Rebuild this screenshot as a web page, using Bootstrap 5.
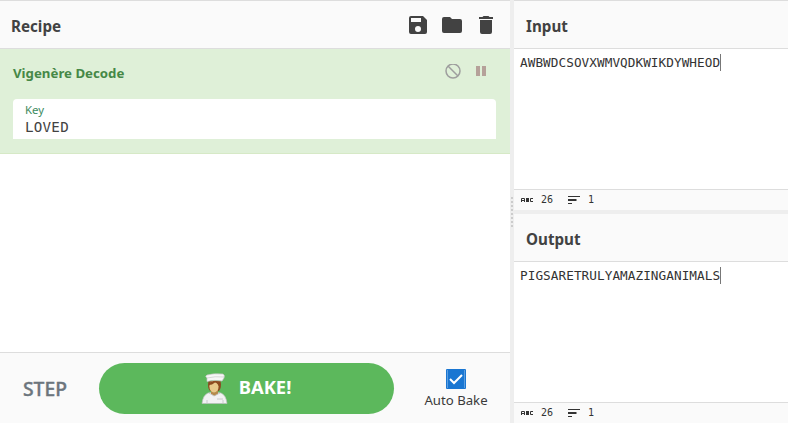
<!DOCTYPE html>
<html lang="en">
<head>
<meta charset="utf-8">
<meta name="viewport" content="width=device-width, initial-scale=1">
<title>Recipe</title>
<link href="https://cdn.jsdelivr.net/npm/bootstrap@5.3.0/dist/css/bootstrap.min.css" rel="stylesheet">
<style>
body{font-family:"Noto Sans","Open Sans",sans-serif;color:#424242;font-size:14px;background:#fff}
svg{display:block;flex:none}
.workspace{height:423px}
.recipe-pane{width:510px;flex:none}
.pane-title{height:49px;flex:none;background:#fafafa;border-top:1px solid #ddd;border-bottom:1px solid #ddd;font-weight:700;font-size:15.2px;padding:3px 12px 0 11px}
.io-pane .pane-title{padding-left:12px}
.io-pane .output-title{height:48px;border-top:0;padding-top:4px}
.tools{gap:14px;padding-right:2px}
.operation{height:105px;flex:none;background:#dff0d8;border-bottom:1px solid #d6e9c6;padding:0 14px 0 13px}
.op-title{height:50px;padding-top:15px;color:#468847;font-weight:700;font-size:13.25px;line-height:18px}
.op-icons{gap:15px;margin-right:10px}
.arg{height:40px;background:#fff;border-radius:4px 4px 0 0;padding:4px 12px 0}
.arg-label{font-size:11.4px;line-height:14px;height:15px;color:#3d8b60}
.arg-value{font:14.2px/19px "DejaVu Sans Mono",monospace;letter-spacing:.25px;color:#424242}
.controls{height:71px;flex:none;background:#fafafa;border-top:1px solid #ddd}
.step{width:99px;padding-left:23px;font-size:19.3px;font-weight:500;color:#6c757d;padding-top:2px;-webkit-text-stroke:.4px #6c757d}
.bake{width:295px;height:51px;border-radius:26px;background:#5cb85c;color:#fff;font-size:18.4px;font-weight:700;padding:0 3px 3px 0;border:0}
.bake:hover{background:#5cb85c;color:#fff}
.auto{width:116px;padding:16px 0 0 8px}
.auto span{font-size:13.2px;line-height:20px;color:#3a3a3a;margin-top:1px}
.gutter-v{width:4px;flex:none;background:#eee}
.gutter-h{height:4px;flex:none;background:#eee}
.code{font:12.7px/16px "DejaVu Sans Mono",monospace;letter-spacing:.06px;color:#333;padding:5px 6px}
.code span{padding-top:1px}
.caret{width:1px;height:17px;background:#777}
.status{height:21px;flex:none;background:#fafafa;border-top:1px solid #ddd;padding-left:7px;font:10px/14px "DejaVu Sans Mono",monospace;color:#333}
.count{width:27px;padding-left:8px}
</style>
<script src="https://cdn.jsdelivr.net/npm/bootstrap@5.3.0/dist/js/bootstrap.bundle.min.js"></script>
</head>
<body class="overflow-hidden">
<main class="workspace d-flex">
  <section class="recipe-pane d-flex flex-column">
    <header class="pane-title d-flex align-items-center justify-content-between">
      <span>Recipe</span>
      <div class="tools d-flex align-items-center">
        <svg width="20" height="20" viewBox="0 0 20 20" fill="#424242"><path fill-rule="evenodd" d="M3 0H15L19 4V16Q19 18 17 18H3Q1 18 1 16V2Q1 0 3 0ZM3 2V6H13V2ZM10 10A3 3 0 1 0 10 16A3 3 0 1 0 10 10Z"/></svg>
        <svg width="20" height="20" viewBox="0 0 20 20" fill="#424242"><path d="M2 1H8L10 3H18Q20 3 20 5V15Q20 17 18 17H2Q0 17 0 15V3Q0 1 2 1Z"/></svg>
        <svg width="20" height="20" viewBox="0 0 20 20" fill="#424242"><path d="M3 1H6.5L7.5 0H12.500L13.500 1H17V3H3ZM4 4H16V16Q16 18 14 18H6Q4 18 4 16Z"/></svg>
      </div>
    </header>
    <article class="operation">
      <div class="op-title d-flex justify-content-between">
        <span>Vigenère Decode</span>
        <div class="op-icons d-flex">
          <svg width="16" height="16" viewBox="0 0 16 16" fill="none" stroke="#9e9e9e" stroke-width="1.500"><circle cx="8" cy="7" r="7"/><path d="M3 2L13 12"/></svg>
          <svg width="10" height="16" viewBox="0 0 10 16" fill="#b5a199"><path d="M0 2H4V12H0ZM6 2H10V12H6Z"/></svg>
        </div>
      </div>
      <div class="arg">
        <div class="arg-label">Key</div>
        <div class="arg-value">LOVED</div>
      </div>
    </article>
    <div class="flex-grow-1"></div>
    <footer class="controls d-flex align-items-center">
      <div class="step">STEP</div>
      <button class="btn bake d-flex align-items-center justify-content-center" type="button">
        <svg class="me-2 mt-1" width="32" height="32" viewBox="0 0 32 32">
          <path d="M3 30.500Q4 22 9 20L15 19L22 20Q27 22 28 30.500Z" fill="#f2f2f3" stroke="#b9bfba" stroke-width=".7"/>
          <path d="M9.500 8Q8 15 11 18L20 18Q23 14 21.500 8Z" fill="#8b4a20"/>
          <path d="M12 16H19V21L15.500 23L12 21Z" fill="#b58a4b"/>
          <ellipse cx="15" cy="13.500" rx="4.600" ry="6" fill="#e8c98c"/>
          <path d="M10 11Q12 7 20 8L20.500 15Q19 10 16 9.500Q13 12 10 12Z" fill="#8b4a20"/>
          <path d="M8 8.500L8 5Q5.500 3 8 2Q15 0 24 1Q26 2 25 5L23 8Q15 6.500 8 8.500Z" fill="#f7f7f7" stroke="#c4c4c4" stroke-width=".7"/>
          <path d="M8 5Q16 3 25 4" fill="none" stroke="#cfcfcf" stroke-width=".8"/>
          <path d="M10 20L15 23L21 20M8 27V31M24 27V31M18 26H24" fill="none" stroke="#bfc0c2" stroke-width=".8"/>
        </svg>
        <span>BAKE!</span>
      </button>
      <label class="auto d-flex flex-column align-items-center align-self-start">
        <svg width="20" height="20" viewBox="0 0 20 20"><rect width="20" height="20" rx="1" fill="#1976d2"/><path d="M1.500 1V19M18.500 1V19" stroke="#5d9fe0"/><path d="M4 10L8 14L16 6" fill="none" stroke="#fff" stroke-width="2"/></svg>
        <span>Auto Bake</span>
      </label>
    </footer>
  </section>
  <div class="gutter-v d-flex align-items-center"><svg width="4" height="32" viewBox="0 0 4 32"><path d="M2 1V32" stroke="#ccc" stroke-width="2" stroke-dasharray="2 2"/></svg></div>
  <section class="io-pane flex-grow-1 d-flex flex-column">
    <header class="pane-title d-flex align-items-center">Input</header>
    <div class="code d-flex flex-grow-1 align-items-start"><span>AWBWDCSOVXWMVQDKWIKDYWHEOD</span><i class="caret"></i></div>
    <div class="status d-flex align-items-center">
      <svg width="12" height="5" viewBox="0 0 12 5" fill="none" stroke="#333"><path d="M.5 4V.5H3.500V4M.5 2.500H3.500M8 .5H5M5 1.500H8M5 2.500H8M5 3.500H8M12 .5H9.500V3.500H12"/></svg>
      <span class="count">26</span>
      <svg class="ms-2" width="12" height="8" viewBox="0 0 12 8" fill="#333"><path d="M0 0H12V1H0ZM0 3H8.500V5H0ZM0 7H4V8H0Z"/></svg>
      <span class="count">1</span>
    </div>
    <div class="gutter-h"></div>
    <header class="pane-title output-title d-flex align-items-center">Output</header>
    <div class="code d-flex flex-grow-1 align-items-start"><span>PIGSARETRULYAMAZINGANIMALS</span><i class="caret"></i></div>
    <div class="status d-flex align-items-center">
      <svg width="12" height="5" viewBox="0 0 12 5" fill="none" stroke="#333"><path d="M.5 4V.5H3.500V4M.5 2.500H3.500M8 .5H5M5 1.500H8M5 2.500H8M5 3.500H8M12 .5H9.500V3.500H12"/></svg>
      <span class="count">26</span>
      <svg class="ms-2" width="12" height="8" viewBox="0 0 12 8" fill="#333"><path d="M0 0H12V1H0ZM0 3H8.500V5H0ZM0 7H4V8H0Z"/></svg>
      <span class="count">1</span>
    </div>
  </section>
</main>
</body>
</html>
